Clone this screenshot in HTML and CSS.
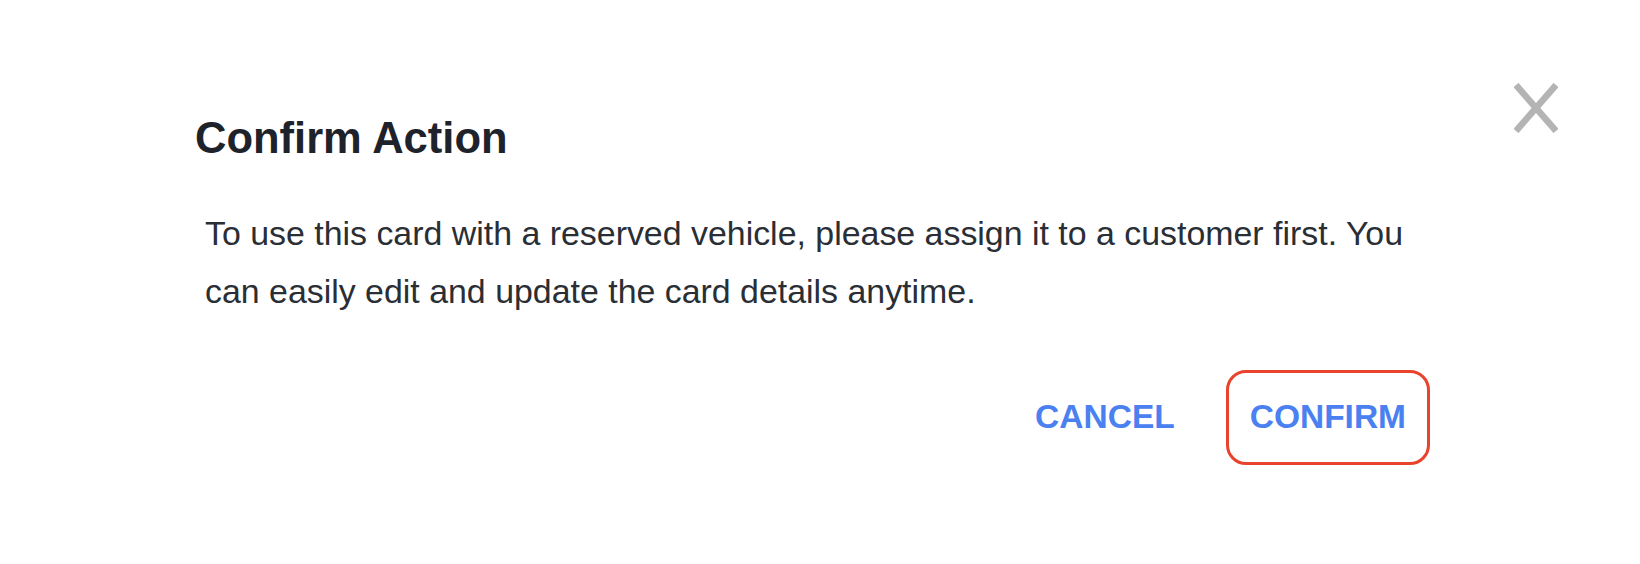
FILE: index.html
```html
<!DOCTYPE html>
<html lang="en">
<head>
    <meta charset="UTF-8">
    <meta name="viewport" content="width=device-width, initial-scale=1.0">
    <link rel="stylesheet" href="styles.css">
</head>
<body>

<!-- Confirm dialog -->
<div class="dialog">
    <div class="dialog-header">
        <h2 class="dialog-title">Confirm Action</h2>
        <button class="close-btn" aria-label="Close">
            <svg width="44" height="50" viewBox="0 0 44 50">
                <line x1="2" y1="2" x2="42" y2="48" stroke="#b4b4b4" stroke-width="6.5"/>
                <line x1="42" y1="2" x2="2" y2="48" stroke="#b4b4b4" stroke-width="6.5"/>
            </svg>
        </button>
    </div>

    <p class="dialog-text">To use this card with a reserved vehicle, please assign it to a customer first. You can easily edit and update the card details anytime.</p>

    <div class="dialog-actions">
        <button class="action-btn">CANCEL</button>
        <button class="action-btn confirm">CONFIRM</button>
    </div>
</div>

</body>
</html>
```

FILE: styles.css
```css
body {
    background-color: white;
    margin: 0;
    padding: 0;
    font-family: "Liberation Sans", Arial, sans-serif;
}

/* Dialog */
.dialog {
    display: flex;
    flex-direction: column;
    padding: 83px 82px 0 195px;
}

.dialog-header {
    display: flex;
    justify-content: space-between;
    align-items: flex-start;
}

.dialog-title {
    margin: 30px 0 0 0;
    font-size: 43.5px;
    line-height: 50px;
    font-weight: bold;
    color: #1e232b;
}

.close-btn {
    background: none;
    border: none;
    padding: 0;
    cursor: pointer;
    display: flex;
}

.dialog-text {
    margin: 41px 0 0 10px;
    max-width: 1230px;
    font-size: 33.9px;
    line-height: 58px;
    color: #2a2e35;
}

/* Buttons */
.dialog-actions {
    display: flex;
    justify-content: flex-end;
    gap: 27px;
    margin: 50px 128px 0 0;
}

.action-btn {
    font-family: "Liberation Sans", Arial, sans-serif;
    font-size: 33.5px;
    font-weight: bold;
    line-height: 40px;
    color: #4b80f1;
    background: none;
    border: 3px solid transparent;
    border-radius: 20px;
    padding: 24px 21px 25px;
    cursor: pointer;
}

.action-btn.confirm {
    border-color: #e8432c;
}
```
